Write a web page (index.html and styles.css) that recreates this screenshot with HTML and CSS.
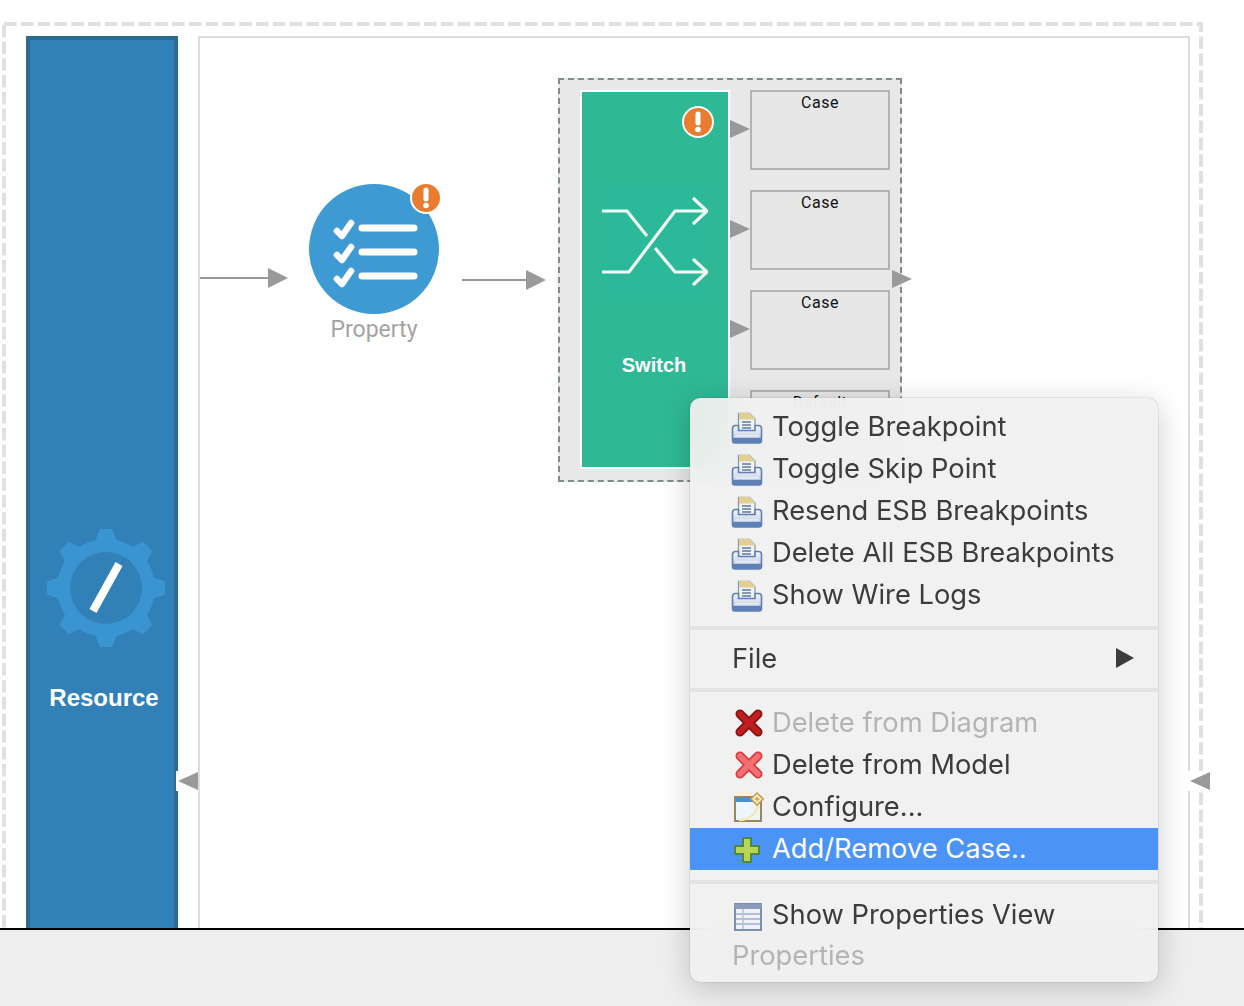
FILE: index.html
```html
<!DOCTYPE html>
<html lang="en">
<head>
    <meta charset="UTF-8">
    <title>Switch mediator</title>
    <link rel="stylesheet" href="styles.css">
</head>
<body>

    <svg class="defs" width="0" height="0">
        <defs>
            <linearGradient id="tray" x1="0" y1="0" x2="0" y2="1">
                <stop offset="0" stop-color="#f4f6fa"/>
                <stop offset="0.5" stop-color="#d5deec"/>
                <stop offset="1" stop-color="#8ba5cf"/>
            </linearGradient>
            <symbol id="ico-print" viewBox="0 0 32 32">
                <path d="M7.500 1.500h11l5.500 5.500v12H7.500z" fill="#f1f3f7" stroke="#8d97ad" stroke-width="1.300"/>
                <path d="M8 1h10.500L24 6.500v1H8z" fill="#e2cf92"/>
                <path d="M11 10h9M11 13h9M11 16h9" stroke="#5f78a8" stroke-width="1.500"/>
                <path d="M1.500 16.500q0-3 3-3h3v5h16.500v-5h3.500q3 0 3 3v12q0 2.500-2.500 2.500H4q-2.500 0-2.500-2.500z" fill="url(#tray)" stroke="#5f80b4" stroke-width="1.600"/>
                <path d="M2 26h28v3q0 2-2 2H4q-2 0-2-2z" fill="#5f80b4"/>
                <path d="M4 24h24" stroke="#fff" stroke-width="1"/>
            </symbol>
            <symbol id="ico-x-dark" viewBox="0 0 28 28">
                <path d="M5 5l18 18M23 5L5 23" stroke="#8c1010" stroke-width="9" stroke-linecap="round"/>
                <path d="M5 5l18 18M23 5L5 23" stroke="#bb1f1f" stroke-width="5.500" stroke-linecap="round"/>
            </symbol>
            <symbol id="ico-x-red" viewBox="0 0 28 28">
                <path d="M5 5l18 18M23 5L5 23" stroke="#dc3a3f" stroke-width="9" stroke-linecap="round"/>
                <path d="M5 5l18 18M23 5L5 23" stroke="#f26f72" stroke-width="5.500" stroke-linecap="round"/>
            </symbol>
            <symbol id="ico-config" viewBox="0 0 30 30">
                <rect x="1" y="5" width="26" height="24" fill="#eef6fd" stroke="#95885f" stroke-width="2"/>
                <rect x="2" y="5" width="24" height="5" fill="#4a90cf"/>
                <path d="M5 28q15 0 19-15" fill="none" stroke="#f4e8b8" stroke-width="2.500"/>
                <path d="M23 1l6 6-6 6-6-6z" fill="#fbf3d2" stroke="#c9a04e" stroke-width="1.600"/>
                <path d="M23 4.500v5M20.500 7h5" stroke="#c9a04e" stroke-width="1.300"/>
            </symbol>
            <symbol id="ico-plus" viewBox="0 0 26 26">
                <path d="M9 1h8v8h8v8h-8v8H9v-8H1V9h8z" fill="#b9d556" stroke="#4f8a3c" stroke-width="2"/>
            </symbol>
            <symbol id="ico-table" viewBox="0 0 28 28">
                <rect x="1" y="1" width="26" height="26" fill="#f0f2f8" stroke="#7b8fb0" stroke-width="2"/>
                <rect x="1" y="1" width="26" height="5" fill="#8b9cb8"/>
                <path d="M2 11h24M2 16h24M2 21h24" stroke="#b3c0d8" stroke-width="2"/>
                <path d="M9 6v20" stroke="#b3c0d8" stroke-width="1.500"/>
            </symbol>
            <symbol id="ico-alert" viewBox="0 0 32 32">
                <circle cx="16" cy="16" r="15" fill="#e97c2e" stroke="#fff" stroke-width="2"/>
                <path d="M16 8v9" stroke="#fff" stroke-width="5" stroke-linecap="round"/>
                <circle cx="16" cy="23.500" r="2.800" fill="#fff"/>
            </symbol>
            <polygon id="gear-tooth" points="57,5 67,5 73,22 51,22" stroke="#3a94d0" stroke-width="4" stroke-linejoin="round"/>
        </defs>
    </svg>

    <main class="canvas">
        <svg class="dashes" width="1244" height="928">
            <rect x="4" y="24" width="1197" height="960" fill="none" stroke="#e0e0e0" stroke-width="4" stroke-dasharray="12.500 4.300"/>
        </svg>

        <div class="sequence"></div>

        <div class="resource">
            <svg class="gear" width="124" height="124" viewBox="0 0 124 124">
                <g fill="#3a94d0">
                    <circle cx="62" cy="62" r="49"/>
                    <use href="#gear-tooth"/>
                    <use href="#gear-tooth" transform="rotate(45 62 62)"/>
                    <use href="#gear-tooth" transform="rotate(90 62 62)"/>
                    <use href="#gear-tooth" transform="rotate(135 62 62)"/>
                    <use href="#gear-tooth" transform="rotate(180 62 62)"/>
                    <use href="#gear-tooth" transform="rotate(225 62 62)"/>
                    <use href="#gear-tooth" transform="rotate(270 62 62)"/>
                    <use href="#gear-tooth" transform="rotate(315 62 62)"/>
                </g>
                <circle cx="62" cy="62" r="36" fill="#3180b8"/>
                <path d="M75 38L49 85" stroke="#fff" stroke-width="8"/>
            </svg>
            <span class="resource-label">Resource</span>
        </div>

        <div class="arrow arrow-in"></div>
        <div class="arrow arrow-out"></div>

        <div class="tri tri-case1"></div>
        <div class="tri tri-case2"></div>
        <div class="tri tri-case3"></div>
        <div class="port port-res"></div>
        <div class="port port-seq"></div>

        <div class="property">
            <svg class="property-icon" width="130" height="130" viewBox="0 0 130 130">
                <circle cx="65" cy="65" r="65" fill="#3d9ad3"/>
                <g fill="none" stroke="#fff" stroke-linecap="round" stroke-linejoin="round">
                    <path d="M53 44h52M53 68h52M53 92h52" stroke-width="7"/>
                    <path d="M28 47l5 5 9-13M28 71l5 5 9-13M28 95l5 5 9-13" stroke-width="6.500"/>
                </g>
            </svg>
            <span class="property-label">Property</span>
            <svg class="badge badge-property" width="32" height="32"><use href="#ico-alert"/></svg>
        </div>

        <div class="switch-box">
            <div class="switch-node">
                <svg class="badge badge-switch" width="32" height="32"><use href="#ico-alert"/></svg>
                <svg class="switch-icon" width="106" height="118" viewBox="0 0 106 118">
                    <g fill="none" stroke="#f2fbf8" stroke-width="3.200">
                        <path d="M0 27h25L45 52M53 64L73 88h32M0 88h27L73 27h32"/>
                        <path d="M91 14l14 13-14 13M91 75l14 13-14 13"/>
                    </g>
                </svg>
                <span class="switch-label">Switch</span>
            </div>
            <div class="cases">
                <div class="case">Case</div>
                <div class="case">Case</div>
                <div class="case">Case</div>
                <div class="case">Default</div>
            </div>
        </div>
        <div class="tri tri-switch"></div>
    </main>

    <footer class="bottom"></footer>

    <nav class="menu">
        <div class="row"><svg class="ico" width="32" height="32"><use href="#ico-print"/></svg>Toggle Breakpoint</div>
        <div class="row"><svg class="ico" width="32" height="32"><use href="#ico-print"/></svg>Toggle Skip Point</div>
        <div class="row"><svg class="ico" width="32" height="32"><use href="#ico-print"/></svg>Resend ESB Breakpoints</div>
        <div class="row"><svg class="ico" width="32" height="32"><use href="#ico-print"/></svg>Delete All ESB Breakpoints</div>
        <div class="row"><svg class="ico" width="32" height="32"><use href="#ico-print"/></svg>Show Wire Logs</div>
        <hr class="sep sep-a">
        <div class="row row-plain">File<span class="sub-arrow"></span></div>
        <hr class="sep sep-b">
        <div class="row row-off"><svg class="ico ico-x" width="28" height="28"><use href="#ico-x-dark"/></svg>Delete from Diagram</div>
        <div class="row"><svg class="ico ico-x" width="28" height="28"><use href="#ico-x-red"/></svg>Delete from Model</div>
        <div class="row"><svg class="ico ico-config" width="30" height="30"><use href="#ico-config"/></svg>Configure...</div>
        <div class="row row-on"><svg class="ico ico-plus" width="26" height="26"><use href="#ico-plus"/></svg>Add/Remove Case..</div>
        <hr class="sep sep-c">
        <div class="row"><svg class="ico ico-table" width="28" height="28"><use href="#ico-table"/></svg>Show Properties View</div>
        <div class="row row-plain row-off row-last">Properties</div>
    </nav>

</body>
</html>
```

FILE: styles.css
```css
html, body { margin: 0; padding: 0; background: #fff; }
body { position: relative; width: 1244px; height: 1006px; overflow: hidden; font-family: "Liberation Sans", Arial, sans-serif; }
.defs { position: absolute; }

.canvas { position: relative; height: 928px; overflow: hidden; background: #fff; }
.bottom { height: 76px; border-top: 2px solid #000; background: #eee; }
.dashes { position: absolute; left: 0; top: 0; }

.sequence { position: absolute; left: 198px; top: 36px; width: 988px; height: 900px; border: 2px solid #ddd; }

.resource { position: absolute; left: 26px; top: 36px; width: 144px; height: 900px; background: #3180b8; border: 4px solid #2a6b94; }
.gear { position: absolute; left: 14px; top: 486px; }
.resource-label { position: absolute; left: 0; right: -4px; top: 643px; text-align: center; color: #fff; font-weight: bold; font-size: 24px; line-height: 30px; }

.arrow { position: absolute; height: 2px; background: #999; }
.arrow::after { content: ""; position: absolute; right: -20px; top: -9px; border-left: 20px solid #999; border-top: 10px solid transparent; border-bottom: 10px solid transparent; }
.arrow-in { left: 200px; top: 277px; width: 68px; }
.arrow-out { left: 462px; top: 279px; width: 64px; }

.tri { position: absolute; width: 0; height: 0; border-left: 20px solid #999; border-top: 9px solid transparent; border-bottom: 9px solid transparent; z-index: 2; }
.tri-case1 { left: 730px; top: 120px; }
.tri-case2 { left: 730px; top: 220px; }
.tri-case3 { left: 730px; top: 320px; }
.tri-switch { left: 892px; top: 270px; }

/* left pointing ports sit on a white patch that breaks the border */
.port { position: absolute; top: 771px; width: 22px; height: 20px; background: #fff; }
.port::after { content: ""; position: absolute; right: 0; top: 1px; border-right: 20px solid #999; border-top: 9px solid transparent; border-bottom: 9px solid transparent; }
.port-res { left: 176px; }
.port-seq { left: 1188px; }

.property { position: absolute; left: 309px; top: 184px; width: 130px; }
.property-icon { display: block; }
.property-label { display: block; margin-top: 2px; text-align: center; color: #a3a3a3; font-family: Roboto, sans-serif; font-size: 23px; line-height: 28px; }
.badge { position: absolute; }
.badge-property { left: 101px; top: -2px; }
.badge-switch { left: 100px; top: 14px; }

.switch-box { position: absolute; left: 558px; top: 78px; width: 340px; height: 400px; background: #e8e8e8; border: 2px dashed #7f8c8c; }
.switch-node { position: absolute; left: 20px; top: 10px; width: 146px; height: 375px; background: #2fb896; border: 2px solid #fff; }
.switch-icon { position: absolute; left: 20px; top: 92px; background: #2cb999; }
.switch-label { position: absolute; left: 0; right: 2px; top: 260px; text-align: center; color: #fff; font-weight: bold; font-size: 20px; line-height: 26px; }

.cases { position: absolute; left: 190px; top: 10px; display: flex; flex-direction: column; gap: 20px; }
.case { width: 136px; height: 76px; border: 2px solid #b3b3b3; background: #e7e7e7; text-align: center; color: #111; font-family: Roboto, sans-serif; font-size: 16px; letter-spacing: 0.5px; line-height: 22px; }

.menu { position: absolute; left: 690px; top: 398px; width: 468px; height: 584px; box-sizing: border-box; padding-top: 7px; border-radius: 10px; background: rgba(240, 240, 240, 0.94); backdrop-filter: blur(20px); box-shadow: 0 0 1px rgba(0, 0, 0, 0.6), 0 6px 30px rgba(0, 0, 0, 0.2); color: #3c3c3c; font-family: Inter, sans-serif; font-size: 27.3px; }
.row { position: relative; height: 42px; padding-left: 82px; box-sizing: border-box; line-height: 44px; white-space: nowrap; }
.ico { position: absolute; left: 41px; top: 7px; }
.ico-x { left: 45px; top: 8px; }
.ico-config { left: 44px; top: 7px; }
.ico-plus { left: 44px; top: 9px; }
.ico-table { left: 44px; top: 10px; }
.row-plain { padding-left: 42px; }
.row-off { color: #b4b4b4; }
.row-on { margin-top: 1px; background: #4b94f5; color: #fff; line-height: 42px; }
.row-last { margin-top: -1px; }
.sub-arrow { position: absolute; left: 426px; top: 11px; border-left: 18px solid #3c3c3c; border-top: 10px solid transparent; border-bottom: 10px solid transparent; }
.sep { height: 4px; margin: 0; border: 0; background: #e3e3e3; }
.sep-a { margin: 11px 0 7px; }
.sep-b { margin: 9px 0; }
.sep-c { margin: 10px 0 9px; }
```
